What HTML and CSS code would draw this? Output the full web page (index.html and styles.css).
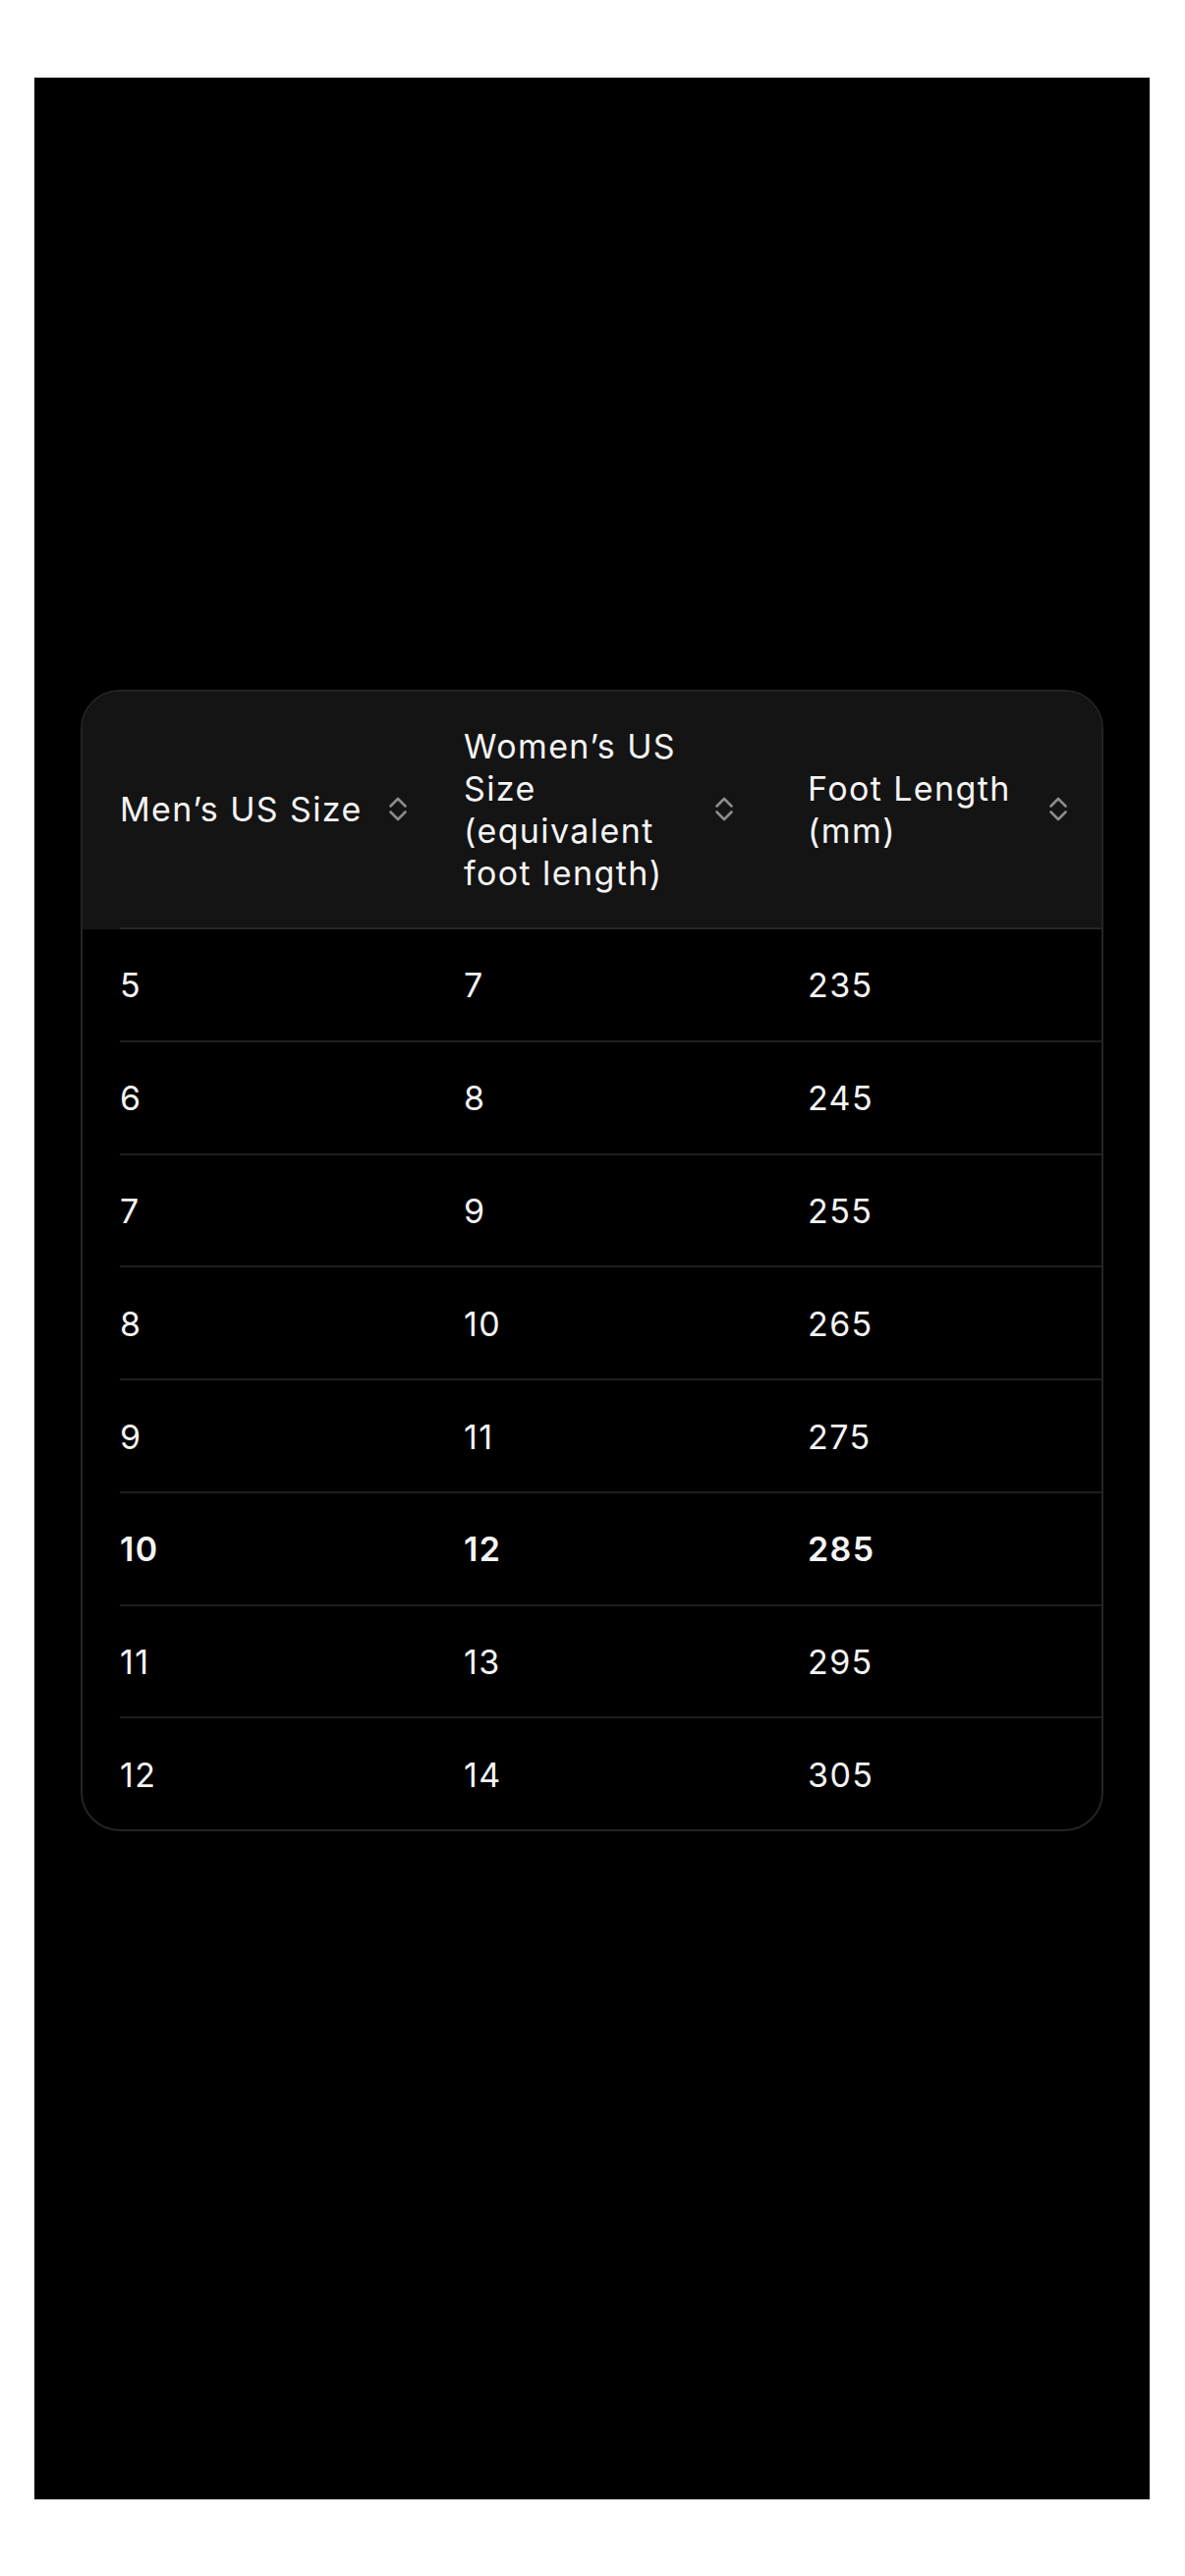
FILE: index.html
```html
<!DOCTYPE html>
<html lang="en">
<head>
<meta charset="utf-8">
<title>Size chart</title>
<link rel="stylesheet" href="styles.css">
</head>
<body>
<main class="screen">
  <section class="card">
    <div class="thead">
      <div class="tr tr-head">
        <div class="th th-1"><span class="th-label">Men’s US Size</span><svg class="sort" viewBox="0 0 20 27" aria-hidden="true"><path d="M2.5 10.5 L10 3 L17.5 10.5 M2.5 16.5 L10 24 L17.5 16.5"/></svg></div>
        <div class="th th-2"><span class="th-label">Women’s US Size (equivalent foot length)</span><svg class="sort" viewBox="0 0 20 27" aria-hidden="true"><path d="M2.5 10.5 L10 3 L17.5 10.5 M2.5 16.5 L10 24 L17.5 16.5"/></svg></div>
        <div class="th th-3"><span class="th-label">Foot Length (mm)</span><svg class="sort" viewBox="0 0 20 27" aria-hidden="true"><path d="M2.5 10.5 L10 3 L17.5 10.5 M2.5 16.5 L10 24 L17.5 16.5"/></svg></div>
      </div>
    </div>
    <div class="tbody">
      <div class="tr"><div class="td">5</div><div class="td">7</div><div class="td">235</div></div>
      <div class="tr"><div class="td">6</div><div class="td">8</div><div class="td">245</div></div>
      <div class="tr"><div class="td">7</div><div class="td">9</div><div class="td">255</div></div>
      <div class="tr"><div class="td">8</div><div class="td">10</div><div class="td">265</div></div>
      <div class="tr"><div class="td">9</div><div class="td">11</div><div class="td">275</div></div>
      <div class="tr tr-strong"><div class="td">10</div><div class="td">12</div><div class="td">285</div></div>
      <div class="tr"><div class="td">11</div><div class="td">13</div><div class="td">295</div></div>
      <div class="tr"><div class="td">12</div><div class="td">14</div><div class="td">305</div></div>
    </div>
  </section>
</main>
</body>
</html>
```

FILE: styles.css
```css
html, body {
  margin: 0;
  padding: 0;
  background: #ffffff;
}

body {
  font-family: Inter, "Noto Sans", "Liberation Sans", sans-serif;
  color: #f4f4f4;
  -webkit-font-smoothing: antialiased;
}

.screen {
  margin: 79px 36px 0 35px;
  height: 2465px;
  background: #000000;
  padding: 623px 47px 0 47px;
  box-sizing: border-box;
}

.card {
  border: 2px solid #242424;
  border-radius: 40px;
  overflow: hidden;
  background: #000000;
}

.thead {
  background: #141414;
}

.tr {
  display: grid;
  grid-template-columns: 350px 350px 1fr;
  margin-left: 38px;
  border-bottom: 2px solid #1e1e1e;
  font-size: 34px;
  line-height: 43px;
  letter-spacing: 1.4px;
}

.tr-head {
  border-bottom-color: #262626;
}

.th {
  display: flex;
  align-items: center;
  justify-content: space-between;
  padding: 33.5px 0 34.5px;
  font-weight: 400;
}

.th-1 { padding-right: 57px; }
.th-2 { padding-right: 75px; }
.th-3 { padding-right: 34px; }

.th-2 .th-label { max-width: 245px; }
.th-3 .th-label { max-width: 238px; }

.sort {
  flex: none;
  width: 20px;
  height: 27px;
  fill: none;
  stroke: #8c8c8c;
  stroke-width: 2.6;
  stroke-linecap: round;
  stroke-linejoin: round;
}

.td {
  padding: 35.4px 0 34.4px;
}

.tbody .tr:last-child {
  border-bottom: none;
}

.tr-strong {
  font-weight: 600;
}
```
